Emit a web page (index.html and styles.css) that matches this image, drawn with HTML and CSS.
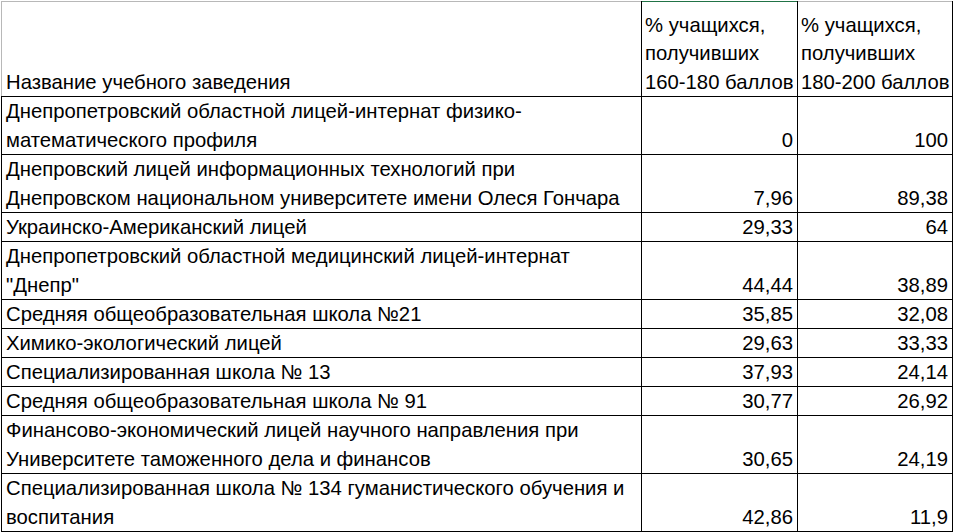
FILE: index.html
```html
<!DOCTYPE html>
<html>
<head>
<meta charset="utf-8">
<link rel="stylesheet" href="styles.css">
</head>
<body>
<table class="sheet">
  <colgroup>
    <col class="c-name">
    <col class="c-num">
    <col class="c-num2">
  </colgroup>
  <thead>
    <tr class="head">
      <th class="name first">Название учебного заведения</th>
      <th class="hnum sel">% учащихся,<br>получивших<br>160-180 баллов</th>
      <th class="hnum">% учащихся,<br>получивших<br>180-200 баллов</th>
    </tr>
  </thead>
  <tbody>
    <tr class="two"><td class="name">Днепропетровский областной лицей-интернат физико-<br>математического профиля</td><td class="num">0</td><td class="num">100</td></tr>
    <tr class="two"><td class="name">Днепровский лицей информационных технологий при<br>Днепровском национальном университете имени Олеся Гончара</td><td class="num">7,96</td><td class="num">89,38</td></tr>
    <tr class="one"><td class="name">Украинско-Американский лицей</td><td class="num">29,33</td><td class="num">64</td></tr>
    <tr class="two"><td class="name">Днепропетровский областной медицинский лицей-интернат<br>"Днепр"</td><td class="num">44,44</td><td class="num">38,89</td></tr>
    <tr class="one"><td class="name">Средняя общеобразовательная школа №21</td><td class="num">35,85</td><td class="num">32,08</td></tr>
    <tr class="one"><td class="name">Химико-экологический лицей</td><td class="num">29,63</td><td class="num">33,33</td></tr>
    <tr class="one"><td class="name">Специализированная школа № 13</td><td class="num">37,93</td><td class="num">24,14</td></tr>
    <tr class="one"><td class="name">Средняя общеобразовательная школа № 91</td><td class="num">30,77</td><td class="num">26,92</td></tr>
    <tr class="two"><td class="name">Финансово-экономический лицей научного направления при<br>Университете таможенного дела и финансов</td><td class="num">30,65</td><td class="num">24,19</td></tr>
    <tr class="two"><td class="name">Специализированная школа № 134 гуманистического обучения и<br>воспитания</td><td class="num">42,86</td><td class="num">11,9</td></tr>
  </tbody>
</table>
</body>
</html>
```

FILE: styles.css
```css
html, body {
  margin: 0;
  padding: 0;
  background: #ffffff;
}
body {
  font-family: "Liberation Sans", Arial, sans-serif;
  font-size: 20.3px;
  color: #000;
  padding-top: 1px;
  padding-left: 1px;
}
.sheet {
  border-collapse: collapse;
  table-layout: fixed;
  width: 951px;
}
.c-name { width: 640px; }
.c-num { width: 156px; }
.c-num2 { width: 155px; }
.sheet td, .sheet th {
  border: 1px solid #000;
  padding: 0 4px 0 4px;
  line-height: 28px;
  vertical-align: bottom;
  font-weight: normal;
  white-space: nowrap;
  overflow: hidden;
  box-sizing: border-box;
}
.sheet tr.one td {
  height: 29px;
  padding-bottom: 0;
}
.sheet tr.two td {
  height: 58px;
  line-height: 28.5px;
}
.head th {
  height: 95px;
  line-height: 28.5px;
  text-align: left;
  border-top: 1px solid #b8b8b8;
}
.head th.first {
  border-left: 1px solid #b8b8b8;
}
.head th.sel {
  border-top: 1px solid #217346;
}
.sheet td.name {
  text-align: left;
}
.sheet td.num {
  text-align: right;
}
.sheet th.hnum {
  padding-left: 3px;
  padding-right: 1px;
}
```
